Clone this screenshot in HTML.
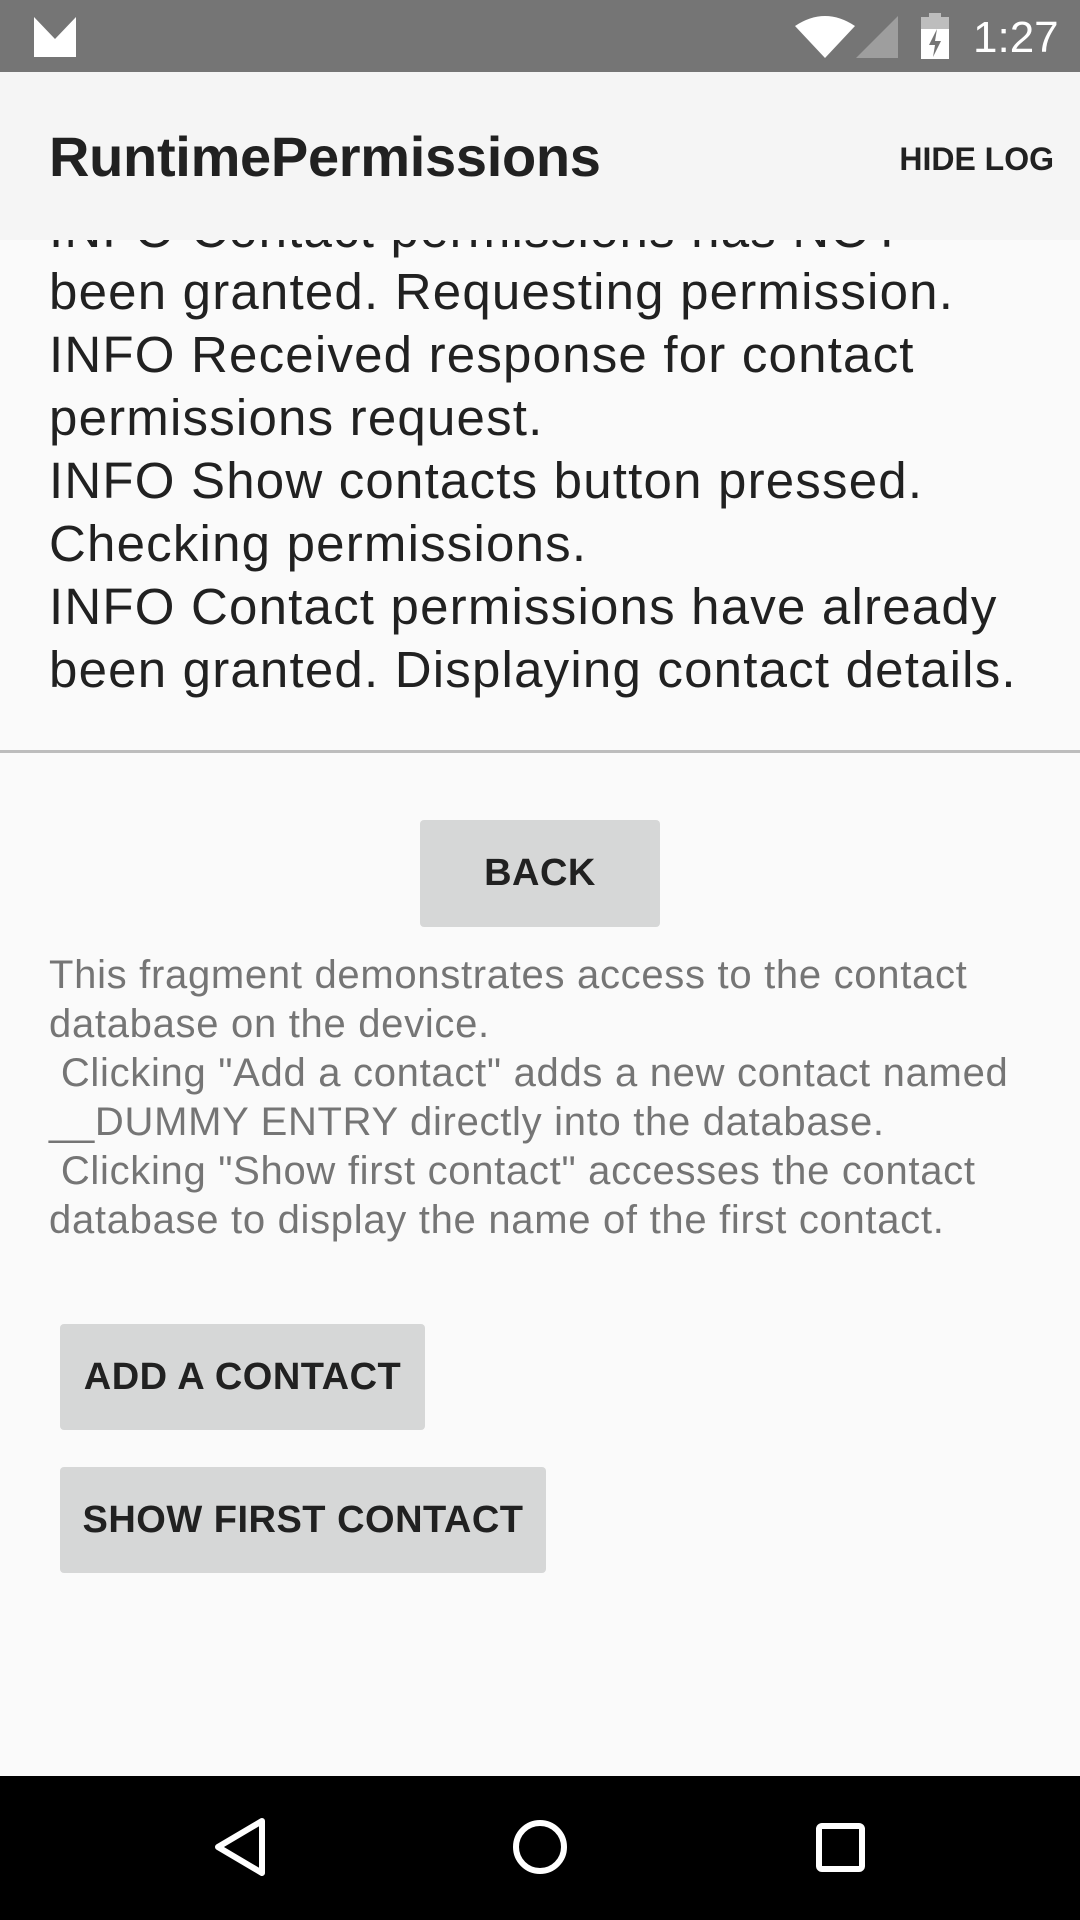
<!DOCTYPE html>
<html><head><meta charset="utf-8"><style>
*{margin:0;padding:0;box-sizing:border-box}
body{width:1080px;height:1920px;background:#fafafa;font-family:"Liberation Sans",sans-serif;position:relative;overflow:hidden}
.abs{position:absolute}
#status{left:0;top:0;width:1080px;height:72px;background:#757575}
#tool{left:0;top:72px;width:1080px;height:168px;background:#f5f5f5;z-index:2}
.log{left:49px;font-size:51px;color:#212121;white-space:nowrap;line-height:63px;letter-spacing:1.2px}
.btn{background:#d6d7d7;border-radius:4px;font-size:38px;font-weight:bold;color:#212121;display:flex;align-items:center;justify-content:center;letter-spacing:0.5px}
.desc{left:49px;top:951px;font-size:40px;line-height:49px;color:#757575;white-space:pre;letter-spacing:0.7px}
</style></head><body>
<div id="status" class="abs">
<svg class="abs" style="left:34px;top:17px" width="42" height="40" viewBox="0 0 42 40"><path d="M0 0 L21 22 L42 0 L42 40 L0 40 Z" fill="#fff"/></svg>
<svg class="abs" style="left:795px;top:16px" width="60" height="42" viewBox="0 0 60 42"><path d="M0 10 Q30 -10 60 10 L30 42 Z" fill="#fff"/></svg>
<svg class="abs" style="left:856px;top:16px" width="42" height="42" viewBox="0 0 42 42"><path d="M42 0 L42 42 L0 42 Z" fill="#9e9e9e"/></svg>
<svg class="abs" style="left:921px;top:13px" width="28" height="46" viewBox="0 0 28 46"><rect x="8" y="0" width="12" height="5" fill="#bdbdbd"/><rect x="0" y="4" width="28" height="12" fill="#bdbdbd"/><rect x="0" y="16" width="28" height="30" fill="#fff"/><path d="M16 16 L8 32 L14 32 L12 44 L20 28 L14 28 Z" fill="#757575"/></svg>
<div class="abs" style="left:973px;top:13px;font-size:44px;color:#fff">1:27</div>
</div>
<div id="tool" class="abs">
<div class="abs" style="left:49px;top:52px;font-size:56px;color:#212121;font-weight:bold;letter-spacing:-0.3px">RuntimePermissions</div>
<div class="abs" style="right:26px;top:69px;font-size:32px;font-weight:bold;color:#212121">HIDE LOG</div>
</div>
<div class="abs log" style="top:198px">INFO Contact permissions has NOT</div>
<div class="abs log" style="top:260px">been granted. Requesting permission.<br>INFO Received response for contact<br>permissions request.<br>INFO Show contacts button pressed.<br>Checking permissions.<br>INFO Contact permissions have already<br>been granted. Displaying contact details.</div>
<div class="abs" style="left:0;top:750px;width:1080px;height:3px;background:#bdbdbd"></div>
<div class="abs btn" style="left:420px;top:820px;width:240px;height:107px">BACK</div>
<div class="abs desc">This fragment demonstrates access to the contact
database on the device.
 Clicking "Add a contact" adds a new contact named
__DUMMY ENTRY directly into the database.
 Clicking "Show first contact" accesses the contact
database to display the name of the first contact.</div>
<div class="abs btn" style="left:60px;top:1324px;width:365px;height:106px">ADD A CONTACT</div>
<div class="abs btn" style="left:60px;top:1467px;width:486px;height:106px">SHOW FIRST CONTACT</div>
<div class="abs" style="left:0;top:1776px;width:1080px;height:144px;background:#000">
<svg class="abs" style="left:0;top:0" width="1080" height="144" viewBox="0 0 1080 144">
<path d="M262 45 L218 71 L262 97 Z" fill="none" stroke="#fff" stroke-width="6" stroke-linejoin="round"/>
<circle cx="540" cy="71" r="24" fill="none" stroke="#fff" stroke-width="6"/>
<rect x="819" y="50" width="43" height="43" rx="3" fill="none" stroke="#fff" stroke-width="6"/>
</svg></div>
</body></html>
